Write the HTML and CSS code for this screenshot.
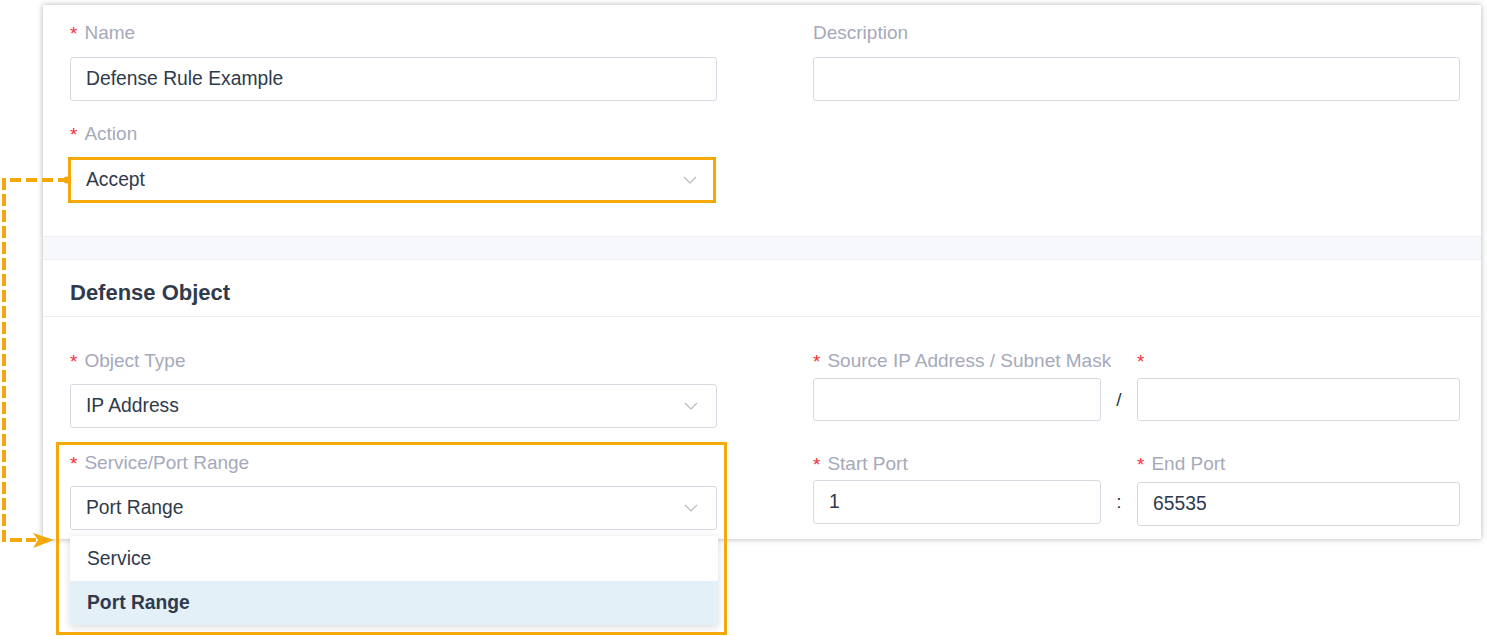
FILE: index.html
```html
<!DOCTYPE html>
<html lang="en">
<head>
    <meta charset="UTF-8">
    <title>Defense Rule</title>
    <link rel="stylesheet" href="styles.css">
</head>
<body>
    <div class="card">
        <div class="top">
            <div class="field">
                <label class="req">Name</label>
                <div class="input">Defense Rule Example</div>
            </div>
            <div class="field">
                <label>Description</label>
                <div class="input"></div>
            </div>
            <div class="field">
                <label class="req">Action</label>
                <div class="input select marked">Accept
                    <svg class="chev" width="14" height="8" viewBox="0 0 14 8"><polyline points="1,1 7,7 13,1" fill="none" stroke="#b8bac2" stroke-width="1.2"/></svg>
                </div>
            </div>
        </div>

        <div class="band"></div>
        <div class="head">Defense Object</div>

        <div class="bottom">
            <div class="col">
                <div class="field">
                    <label class="req">Object Type</label>
                    <div class="input select">IP Address
                        <svg class="chev" width="14" height="8" viewBox="0 0 14 8"><polyline points="1,1 7,7 13,1" fill="none" stroke="#b8bac2" stroke-width="1.2"/></svg>
                    </div>
                </div>
                <div class="field second">
                    <label class="req">Service/Port Range</label>
                    <div class="input select open">Port Range
                        <svg class="chev" width="14" height="8" viewBox="0 0 14 8"><polyline points="1,1 7,7 13,1" fill="none" stroke="#b8bac2" stroke-width="1.2"/></svg>
                        <ul class="menu">
                            <li>Service</li>
                            <li class="active">Port Range</li>
                        </ul>
                    </div>
                </div>
            </div>
            <div class="col">
                <div class="pair">
                    <label class="req">Source IP Address / Subnet Mask</label>
                    <span></span>
                    <label class="req"></label>
                    <div class="input short"></div>
                    <span class="sep">/</span>
                    <div class="input short"></div>
                </div>
                <div class="pair ports">
                    <label class="req">Start Port</label>
                    <span></span>
                    <label class="req">End Port</label>
                    <div class="input">1</div>
                    <span class="sep">:</span>
                    <div class="input end">65535</div>
                </div>
            </div>
        </div>
    </div>

    <div class="callout"></div>

    <svg class="connector" width="80" height="560" viewBox="0 0 80 560">
        <path d="M4 178 V540 H36" fill="none" stroke="#f5a80a" stroke-width="4" stroke-dasharray="12 4"/>
        <path d="M10 180 H64" fill="none" stroke="#f5a80a" stroke-width="4" stroke-dasharray="11 5"/>
        <circle cx="67" cy="180" r="3.5" fill="#f5a80a"/>
        <path d="M33 533 L54 540 L33 548 L38 540 Z" fill="#f5a80a"/>
    </svg>
</body>
</html>
```

FILE: styles.css
```css
body {
    margin: 0;
    background: #fff;
    font-family: "Liberation Sans", Arial, sans-serif;
    color: #2f3a4c;
    position: relative;
    width: 1487px;
    height: 636px;
    overflow: hidden;
}

.card {
    margin: 5px 0 0 43px;
    width: 1438px;
    height: 534px;
    background: #fff;
    box-shadow: 0 0 6px rgba(0, 0, 0, 0.3);
    box-sizing: border-box;
}

.top {
    display: grid;
    grid-template-columns: 647px 647px;
    column-gap: 96px;
    row-gap: 22px;
    padding: 17px 21px 33px 27px;
}

label {
    display: block;
    height: 20px;
    line-height: 22px;
    font-size: 19px;
    color: #a5a9bb;
    white-space: nowrap;
}

label.req::before {
    content: "*";
    color: #f72d3a;
    margin-right: 7px;
    position: relative;
    top: 1px;
}

.field label {
    margin-bottom: 15px;
}

.input {
    position: relative;
    height: 44px;
    line-height: 42px;
    border: 1px solid #d7d8e2;
    border-radius: 3px;
    padding: 0 15px;
    font-size: 19.3px;
    color: #2f3a4c;
    box-sizing: border-box;
    background: #fff;
}

.select.marked {
    border: 3px solid #f5a80a;
    border-radius: 0;
    margin-left: -2px;
    width: 648px;
    height: 46px;
    margin-top: -1px;
    line-height: 40px;
}

.chev {
    position: absolute;
    right: 18px;
    top: 17px;
}

.marked .chev {
    right: 16px;
    top: 16px;
}

.band {
    height: 22px;
    background: #f7f8fb;
    border-top: 1px solid #eeeff4;
    border-bottom: 1px solid #eeeff4;
}

.head {
    padding: 20px 27px 10px;
    line-height: 26px;
    font-size: 22px;
    font-weight: bold;
    color: #2f3a4c;
    border-bottom: 1px solid #eeeff4;
}

.bottom {
    display: grid;
    grid-template-columns: 647px 647px;
    column-gap: 96px;
    padding: 33px 21px 0 27px;
}

.bottom .field label {
    margin-bottom: 14px;
}

.field.second {
    margin-top: 24px;
}

.pair {
    display: grid;
    grid-template-columns: 288px 36px 323px;
}

.pair label {
    margin-bottom: 8px;
}

.pair .input.short {
    height: 43px;
}

.pair.ports {
    margin-top: 32px;
}

.pair.ports label {
    margin-bottom: 7px;
}

.pair .input.end {
    margin-top: 2px;
}

.sep {
    text-align: center;
    font-size: 19px;
    line-height: 43px;
    color: #2f3a4c;
}

.menu {
    position: absolute;
    left: -1px;
    top: calc(100% + 7px);
    width: 648px;
    margin: 0;
    padding: 0;
    list-style: none;
    background: #fff;
    box-shadow: 0 2px 8px rgba(0, 0, 0, 0.15);
    z-index: 2;
}

.menu li {
    height: 44px;
    line-height: 44px;
    padding-left: 17px;
    font-size: 19.3px;
    color: #2f3a4c;
}

.menu li:first-child {
    height: 45px;
    line-height: 45px;
}

.menu li.active {
    background: #e3f0f8;
    font-weight: bold;
}

.callout {
    position: absolute;
    left: 56px;
    top: 442px;
    width: 671px;
    height: 193px;
    border: 3px solid #f5a80a;
    box-sizing: border-box;
    z-index: 3;
}

.connector {
    position: absolute;
    left: 0;
    top: 0;
    z-index: 4;
}
```
